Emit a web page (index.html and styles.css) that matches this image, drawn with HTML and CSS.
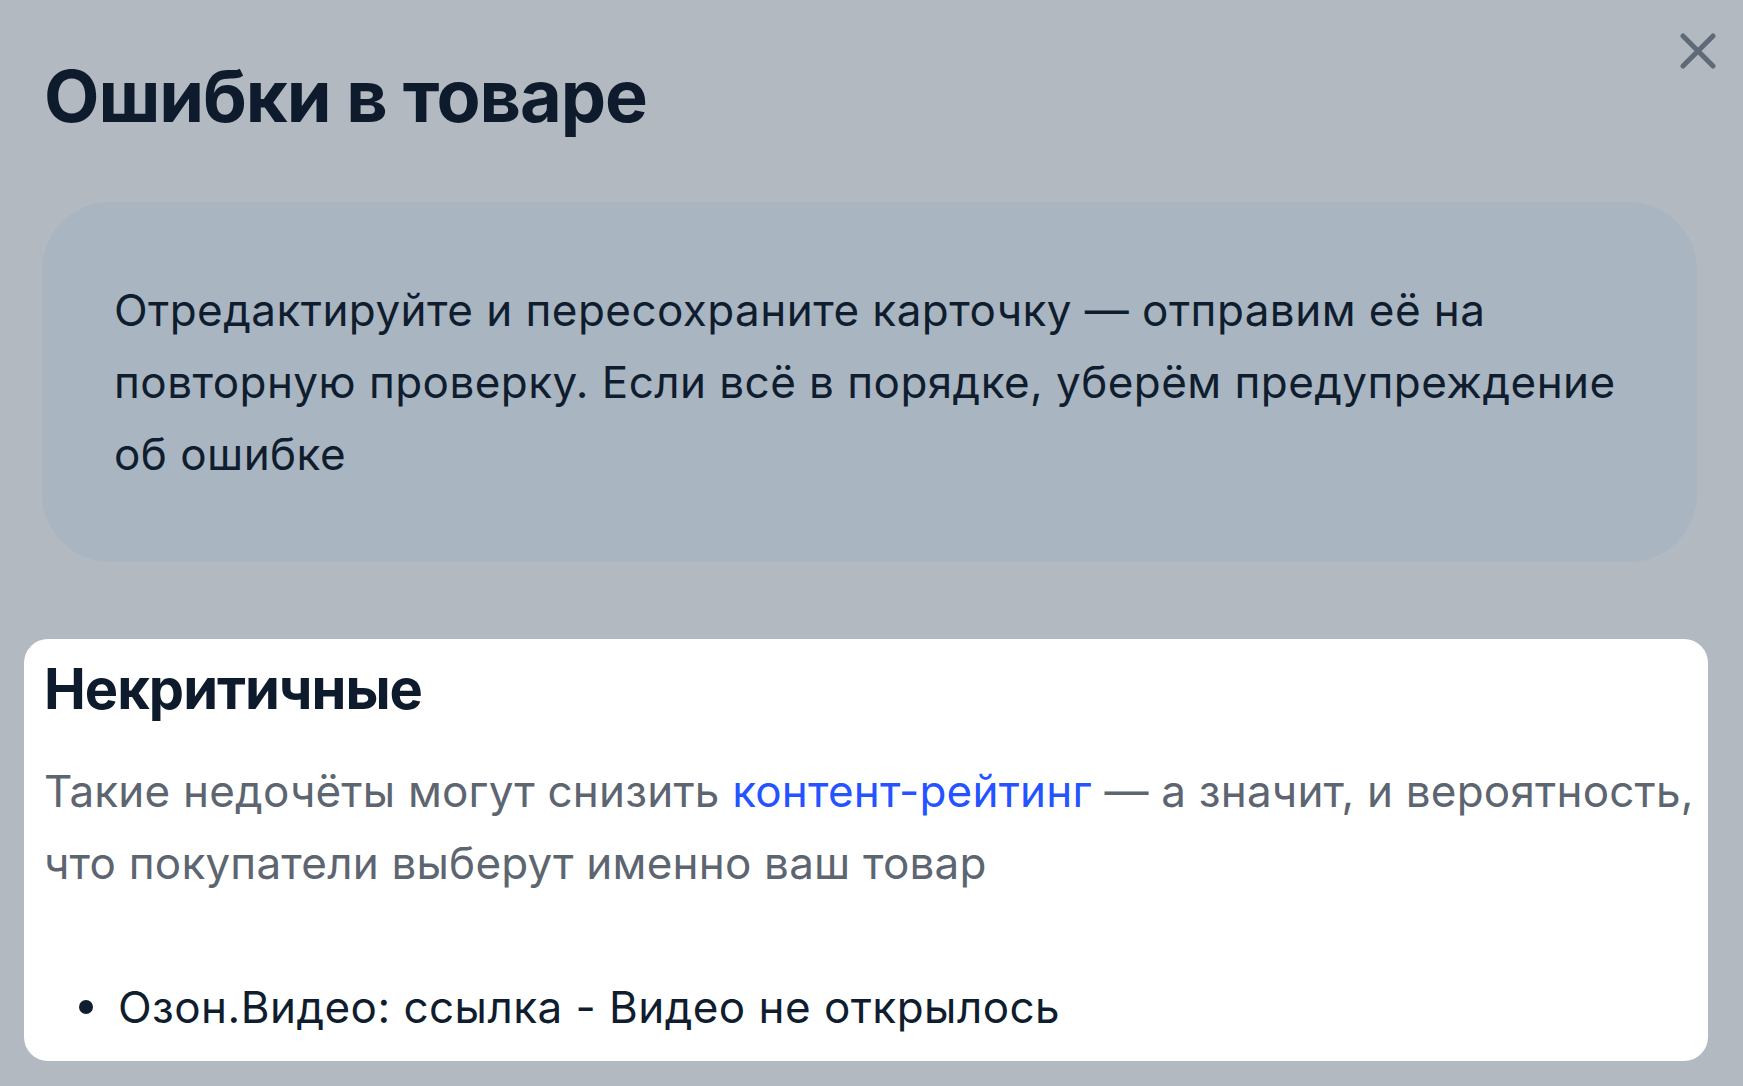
FILE: index.html
```html
<!DOCTYPE html>
<html lang="ru">
<head>
  <meta charset="UTF-8">
  <meta name="viewport" content="width=device-width, initial-scale=1.0">
  <title>Ошибки в товаре</title>
  <link rel="stylesheet" href="styles.css">
</head>
<body>
<div class="modal">
  <button class="close" type="button" aria-label="Закрыть">
    <svg width="36" height="36" viewBox="0 0 36 36">
      <path d="M3 3 L33 33 M33 3 L3 33" stroke="#5f6a78" stroke-width="5" stroke-linecap="round" fill="none"/>
    </svg>
  </button>
  <h1 class="title">Ошибки в товаре</h1>
  <div class="notice">
    <p>Отредактируйте и пересохраните карточку — отправим её на повторную проверку. Если всё в порядке, уберём предупреждение об ошибке</p>
  </div>
  <section class="errors">
    <h2>Некритичные</h2>
    <p class="hint">Такие недочёты могут снизить <a href="#">контент-рейтинг</a> — а значит, и вероятность, что покупатели выберут именно ваш товар</p>
    <ul class="error-list">
      <li>Озон.Видео: ссылка - Видео не открылось</li>
    </ul>
  </section>
</div>
</body>
</html>
```

FILE: styles.css
```css
body {
  margin: 0;
  padding: 0;
  background-color: #b3b9c1;
  font-family: Inter, "Noto Sans", sans-serif;
  color: #0f1d2f;
}

.modal {
  position: relative;
  padding: 52px 35px 0 24px;
}

.close {
  position: absolute;
  top: 33px;
  right: 27px;
  width: 36px;
  height: 36px;
  padding: 0;
  border: 0;
  background: none;
  cursor: pointer;
}

.close svg {
  display: block;
}

.title {
  margin: 0 0 62px 20px;
  font-size: 72px;
  line-height: 88px;
  font-weight: 700;
  letter-spacing: -1.1px;
  color: #0e1b2c;
}

.notice {
  margin: 0 11px 77px 18px;
  padding: 72px;
  border-radius: 68px;
  background-color: #a9b5c1;
}

.notice p {
  margin: 0;
  font-size: 44px;
  line-height: 72px;
  letter-spacing: 0.45px;
}

.errors {
  padding: 16px 6px 18px 20px;
  border-radius: 24px;
  background: #fff;
}

.errors h2 {
  margin: 0 0 32px;
  font-size: 56px;
  line-height: 68px;
  font-weight: 700;
  letter-spacing: -1px;
  color: #0e1b2c;
}

.hint {
  margin: 0 0 72px;
  font-size: 44px;
  line-height: 72px;
  letter-spacing: 0.2px;
  color: #5d6571;
}

.hint a {
  color: #2453ff;
  text-decoration: none;
}

.error-list {
  margin: 0;
  padding: 0;
  list-style: none;
}

.error-list li {
  display: flex;
  align-items: center;
  gap: 25px;
  padding-left: 35px;
  font-size: 44px;
  line-height: 72px;
  letter-spacing: 0.45px;
}

.error-list li::before {
  content: "";
  width: 14px;
  height: 14px;
  border-radius: 50%;
  background: #0f1d2f;
  flex: none;
}
```
